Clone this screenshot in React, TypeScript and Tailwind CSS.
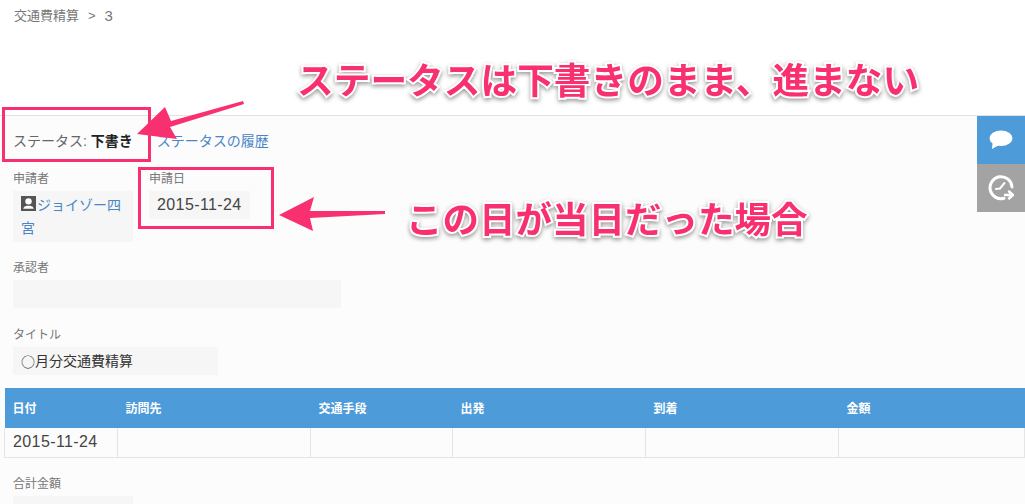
const columns = [
  { label: "日付", width: "w-[113px]" },
  { label: "訪問先", width: "w-[193px]" },
  { label: "交通手段", width: "w-[142px]" },
  { label: "出発", width: "w-[193px]" },
  { label: "到着", width: "w-[193px]" },
  { label: "金額", width: "" },
];

const Field = ({ label, className, children }: { label: string; className: string; children?: React.ReactNode }) => (
  <div>
    <div className="h-[20px] text-[12px] leading-[22px] text-[#777]">{label}</div>
    <div className={`mt-[3px] bg-[#f6f6f6] ${className}`}>{children}</div>
  </div>
);

const Callout = ({ className, children }: { className: string; children: React.ReactNode }) => (
  <div
    className={`absolute whitespace-nowrap font-bold leading-[44px] text-[#f9306f] [-webkit-text-stroke:4px_white] [paint-order:stroke_fill] [filter:drop-shadow(0_2px_2px_rgba(0,0,0,0.4))] ${className}`}
  >
    {children}
  </div>
);

const App = () => {
  return (
    <div className="relative h-[504px] w-[1025px] overflow-hidden bg-white font-['Liberation_Sans','Noto_Sans_CJK_JP',sans-serif] text-[14px] text-[#333]">
      {/* Breadcrumb */}
      <div className="flex h-[115px] items-start gap-[9px] pl-[14px] pt-[6px] text-[13px] leading-[20px] text-[#777]">
        <span>交通費精算</span>
        <span>&gt;</span>
        <span className="text-[15px]">3</span>
      </div>

      {/* Panel */}
      <div className="relative h-[389px] border-t border-[#e3e3e3] bg-[#fcfcfc]">
        <div className="absolute right-0 top-0 flex w-[48px] flex-col">
          <div className="flex h-[48px] items-center justify-center bg-[#4e9bd9]">
            <svg width="24" height="20" viewBox="0 0 26 22" fill="white">
              <ellipse cx="13" cy="9" rx="12.5" ry="8.5" />
              <path d="M4 13 L3 21 L12 16 Z" />
            </svg>
          </div>
          <div className="flex h-[48px] items-center justify-center bg-[#a3a3a3]">
            <svg width="26" height="26" viewBox="0 0 26 26" fill="none" stroke="white" strokeWidth="3" strokeLinecap="round">
              <path d="M16 23.3 A11 11 0 1 1 24 12" />
              <path d="M8 14 L12 13.5 L16.5 8" strokeWidth="2" />
              <path d="M17 20 H24 M21 16.5 L25 20 L21 23.5" strokeWidth="2.4" />
            </svg>
          </div>
        </div>

        <div className="flex h-[52px] items-start gap-[24px] pl-[13px] pt-[15px] text-[14px] leading-[20px]">
          <span className="text-[#666]">
            ステータス: <strong className="font-bold text-[#222]">下書き</strong>
          </span>
          <span className="text-[#4a86c5]">ステータスの履歴</span>
        </div>

        <div className="flex gap-[16px] pl-[13px]">
          <Field label="申請者" className="h-[51px] w-[120px] px-[8px] py-[3px] text-[14px] leading-[23px] text-[#4a86c5]">
            <svg className="mr-[1px] inline-block align-[-1px]" width="15" height="15" viewBox="0 0 14 14">
              <rect width="14" height="14" fill="#555" />
              <circle cx="7" cy="5" r="3" fill="white" />
              <path d="M2 12 C3 9 5 9 7 9 C9 9 11 9 12 12 Z" fill="white" />
            </svg>
            ジョイゾー四宮
          </Field>
          <Field label="申請日" className="flex h-[28px] w-[101px] items-center pl-[8px] text-[16px] tracking-[0.4px] text-[#444]">
            2015-11-24
          </Field>
        </div>

        <div className="mt-[15px] pl-[13px]">
          <Field label="承認者" className="h-[28px] w-[328px]" />
        </div>
        <div className="mt-[16px] pl-[13px]">
          <Field label="タイトル" className="flex h-[28px] w-[205px] items-center pl-[8px] text-[14px] text-[#333]">
            <span className="font-['Noto_Sans_CJK_JP',sans-serif]">○</span>月分交通費精算
          </Field>
        </div>

        {/* Table */}
        <table className="ml-[4px] mt-[13px] w-[1021px] table-fixed border-collapse">
          <thead>
            <tr className="h-[40px] bg-[#4e9bd9] text-left text-[12px] font-bold text-white">
              {columns.map((c) => (
                <th key={c.label} className={`pl-[8px] pt-[1px] ${c.width}`}>
                  {c.label}
                </th>
              ))}
            </tr>
          </thead>
          <tbody>
            <tr className="h-[29px] border-b border-[#e5e5e5] text-[16px] tracking-[0.4px] text-[#444]">
              {columns.map((c, i) => (
                <td key={c.label} className="border-x border-[#e5e5e5] pl-[8px]">
                  {i === 0 ? "2015-11-24" : ""}
                </td>
              ))}
            </tr>
          </tbody>
        </table>

        <div className="mt-[15px] pl-[13px]">
          <Field label="合計金額" className="h-[28px] w-[120px]" />
        </div>
      </div>

      {/* Annotations */}
      <div className="absolute left-[2px] top-[107px] h-[55px] w-[149px] border-[3px] border-[#f9306f]" />
      <div className="absolute left-[138px] top-[167px] h-[62px] w-[136px] border-[3px] border-[#f9306f]" />
      <svg className="absolute left-0 top-0" width="1025" height="504" fill="#f9306f">
        <path d="M243 101 L171 121 L165 107 L137 134 L177 139 L170 127 L244 104 Z" />
        <path d="M385 211 L310 211 L314 197 L279 215 L313 231 L310 218 L385 214 Z" />
      </svg>
      <Callout className="left-[297px] top-[60px] text-[36.7px]">ステータスは下書きのまま、進まない</Callout>
      <Callout className="left-[406px] top-[199px] text-[36.5px]">この日が当日だった場合</Callout>
    </div>
  );
};

export default App;
